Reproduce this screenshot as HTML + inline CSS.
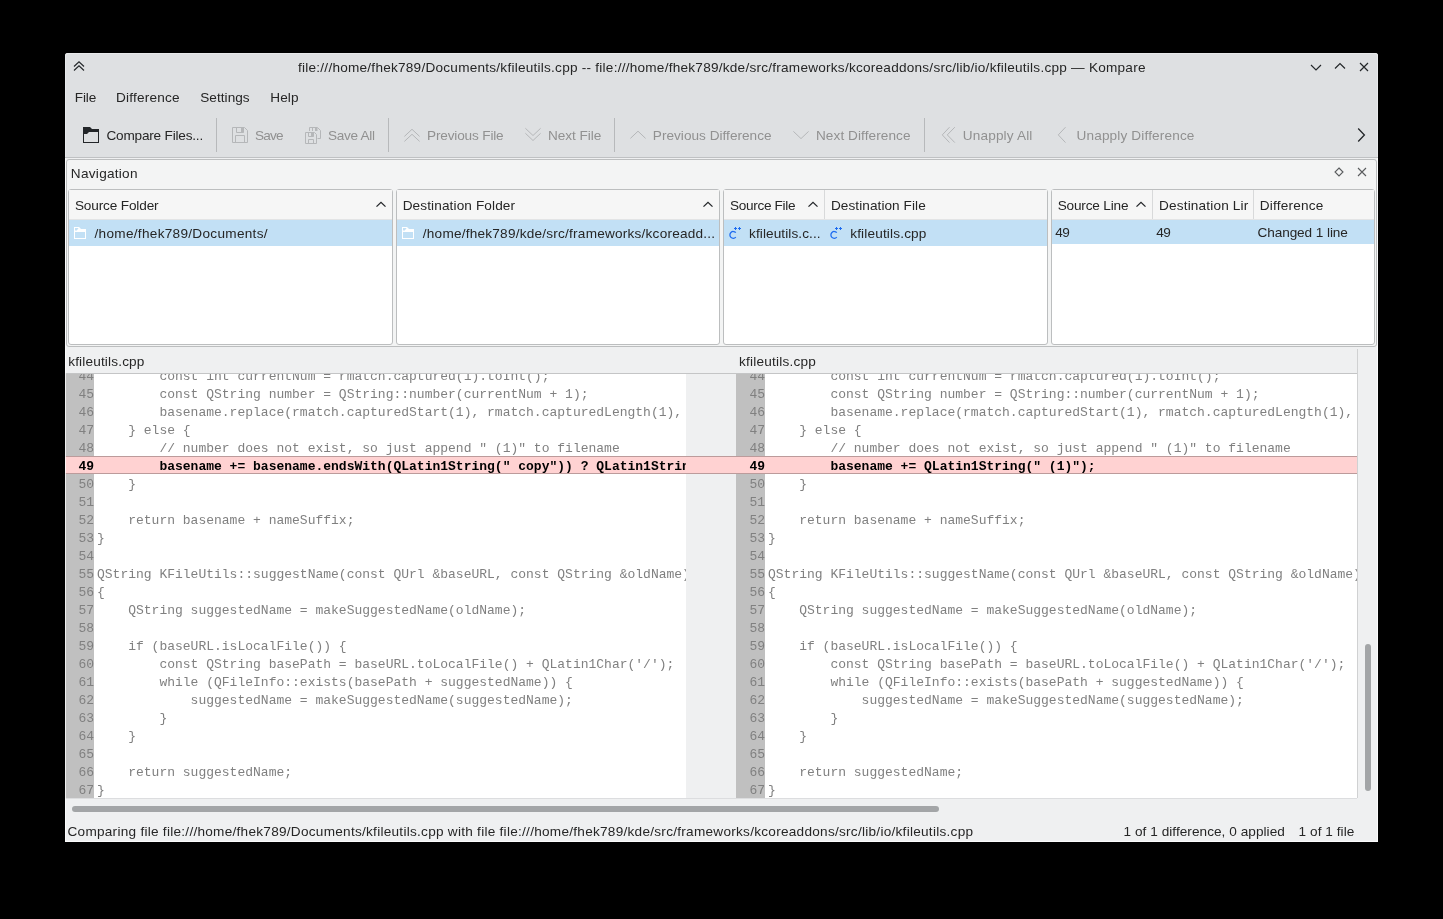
<!DOCTYPE html>
<html><head><meta charset="utf-8"><title>Kompare</title>
<style>
html,body{margin:0;padding:0;background:#000;width:1443px;height:919px;overflow:hidden;font-family:"Liberation Sans", sans-serif;}
</style></head><body>
<div style="position:absolute;left:65px;top:53px;width:1313px;height:789px;background:#eff0f1;border-radius:3px 3px 0 0;"></div><div style="position:absolute;left:65px;top:53px;width:1313px;height:104px;background:#dee0e2;border-radius:3px 3px 0 0;"></div><div style="position:absolute;left:65px;top:157px;width:1313px;height:1px;background:#bfc1c3;"></div><svg style="position:absolute;left:72px;top:60px;" width="14" height="13" viewBox="0 0 14 13"><path d="M2 6.5 L7 1.8 L12 6.5 M2 10.5 L7 5.8 L12 10.5" stroke="#232629" stroke-width="1.15" fill="none" stroke-linecap="butt"/></svg><svg style="position:absolute;left:1309px;top:62px;" width="14" height="10" viewBox="0 0 14 10"><path d="M2 3 L7 8 L12 3" stroke="#232629" stroke-width="1.15" fill="none" stroke-linecap="butt"/></svg><svg style="position:absolute;left:1333px;top:61px;" width="14" height="10" viewBox="0 0 14 10"><path d="M2 7.5 L7 2.5 L12 7.5" stroke="#232629" stroke-width="1.15" fill="none" stroke-linecap="butt"/></svg><svg style="position:absolute;left:1358px;top:61px;" width="13" height="12" viewBox="0 0 13 12"><path d="M2 2 L10 10 M10 2 L2 10" stroke="#232629" stroke-width="1.15" fill="none" stroke-linecap="butt"/></svg><div style="position:absolute;left:298.00px;top:57.79px;line-height:20px;font-size:13.6px;color:#232629;white-space:pre;font-family:'Liberation Sans', sans-serif;letter-spacing:0.239px;filter:grayscale(1);">file:///home/fhek789/Documents/kfileutils.cpp -- file:///home/fhek789/kde/src/frameworks/kcoreaddons/src/lib/io/kfileutils.cpp — Kompare</div><div style="position:absolute;left:74.87px;top:87.79px;line-height:20px;font-size:13.6px;color:#232629;white-space:pre;font-family:'Liberation Sans', sans-serif;letter-spacing:-0.190px;filter:grayscale(1);">File</div><div style="position:absolute;left:116.07px;top:87.79px;line-height:20px;font-size:13.6px;color:#232629;white-space:pre;font-family:'Liberation Sans', sans-serif;letter-spacing:0.192px;filter:grayscale(1);">Difference</div><div style="position:absolute;left:200.23px;top:87.79px;line-height:20px;font-size:13.6px;color:#232629;white-space:pre;font-family:'Liberation Sans', sans-serif;letter-spacing:0.043px;filter:grayscale(1);">Settings</div><div style="position:absolute;left:270.27px;top:87.79px;line-height:20px;font-size:13.6px;color:#232629;white-space:pre;font-family:'Liberation Sans', sans-serif;letter-spacing:0.094px;filter:grayscale(1);">Help</div><div style="position:absolute;left:106.47px;top:125.79px;line-height:20px;font-size:13.6px;color:#232629;white-space:pre;font-family:'Liberation Sans', sans-serif;letter-spacing:-0.199px;filter:grayscale(1);">Compare Files...</div><svg style="position:absolute;left:83px;top:127px;" width="16" height="16" viewBox="0 0 16 16"><path fill-rule="evenodd" d="M0 0 H7 L9 2 H16 V16 H0 Z M1 7 H4 L6 5 H15 V15 H1 Z" fill="#232629"/></svg><div style="position:absolute;left:216px;top:118px;width:1px;height:34px;background:#b7b9bb;"></div><div style="position:absolute;left:388px;top:118px;width:1px;height:34px;background:#b7b9bb;"></div><div style="position:absolute;left:614px;top:118px;width:1px;height:34px;background:#b7b9bb;"></div><div style="position:absolute;left:924px;top:118px;width:1px;height:34px;background:#b7b9bb;"></div><svg style="position:absolute;left:232px;top:127px;" width="16" height="16" viewBox="0 0 16 16"><path d="M0.5 0.5 H12.5 L15.5 3.5 V15.5 H0.5 Z M4.5 0.5 V5.5 H11.5 V0.5 M3.5 15.5 V8.5 H12.5 V15.5" stroke="#b5b7b9" stroke-width="1" fill="none"/><rect x="9" y="1" width="2.5" height="4.5" fill="#b5b7b9"/></svg><div style="position:absolute;left:255.03px;top:125.79px;line-height:20px;font-size:13.6px;color:#8f9193;white-space:pre;font-family:'Liberation Sans', sans-serif;letter-spacing:-0.812px;filter:grayscale(1);">Save</div><svg style="position:absolute;left:305px;top:127px;" width="16" height="17" viewBox="0 0 16 17"><path d="M4.5 4 V0.5 H12.5 L15.5 3.5 V11.5 H12.5 M7.5 0.5 V4 M0.5 5.5 H9.5 L11.5 7.5 V16.5 H0.5 Z M3.5 5.5 V9.5 H8.5 V5.5 M3.5 16.5 V12.5 H8.5 V16.5" stroke="#b5b7b9" stroke-width="1" fill="none"/><rect x="10" y="1" width="2.5" height="3" fill="#b5b7b9"/><rect x="6" y="6" width="2.5" height="3.5" fill="#b5b7b9"/></svg><div style="position:absolute;left:328.03px;top:125.79px;line-height:20px;font-size:13.6px;color:#8f9193;white-space:pre;font-family:'Liberation Sans', sans-serif;letter-spacing:-0.306px;filter:grayscale(1);">Save All</div><svg style="position:absolute;left:404px;top:127px;" width="16" height="16" viewBox="0 0 16 16"><path d="M0.4 9.4 L8 2.3 L15.6 9.4 M0.4 14.4 L8 7.3 L15.6 14.4" stroke="#b5b7b9" stroke-width="1" fill="none"/></svg><div style="position:absolute;left:426.97px;top:125.79px;line-height:20px;font-size:13.6px;color:#8f9193;white-space:pre;font-family:'Liberation Sans', sans-serif;letter-spacing:-0.155px;filter:grayscale(1);">Previous File</div><svg style="position:absolute;left:525px;top:127px;" width="16" height="16" viewBox="0 0 16 16"><path d="M0.4 1.3 L8 8.5 L15.6 1.3 M0.4 6.3 L8 13.5 L15.6 6.3" stroke="#b5b7b9" stroke-width="1" fill="none"/></svg><div style="position:absolute;left:548.07px;top:125.79px;line-height:20px;font-size:13.6px;color:#8f9193;white-space:pre;font-family:'Liberation Sans', sans-serif;letter-spacing:-0.058px;filter:grayscale(1);">Next File</div><svg style="position:absolute;left:630px;top:127px;" width="16" height="16" viewBox="0 0 16 16"><path d="M0.4 11.4 L8 4.2 L15.6 11.4" stroke="#b5b7b9" stroke-width="1" fill="none"/></svg><div style="position:absolute;left:652.87px;top:125.79px;line-height:20px;font-size:13.6px;color:#8f9193;white-space:pre;font-family:'Liberation Sans', sans-serif;letter-spacing:0.016px;filter:grayscale(1);">Previous Difference</div><svg style="position:absolute;left:793px;top:127px;" width="16" height="16" viewBox="0 0 16 16"><path d="M0.4 4.4 L8 11.6 L15.6 4.4" stroke="#b5b7b9" stroke-width="1" fill="none"/></svg><div style="position:absolute;left:815.97px;top:125.79px;line-height:20px;font-size:13.6px;color:#8f9193;white-space:pre;font-family:'Liberation Sans', sans-serif;letter-spacing:0.081px;filter:grayscale(1);">Next Difference</div><svg style="position:absolute;left:941px;top:127px;" width="16" height="16" viewBox="0 0 16 16"><path d="M8.5 0.2 L1.3 7.9 L8.5 15.6 M13.8 0.2 L6.3 7.9 L13.8 15.6" stroke="#b5b7b9" stroke-width="1" fill="none"/></svg><div style="position:absolute;left:962.74px;top:125.79px;line-height:20px;font-size:13.6px;color:#8f9193;white-space:pre;font-family:'Liberation Sans', sans-serif;letter-spacing:0.165px;filter:grayscale(1);">Unapply All</div><svg style="position:absolute;left:1057px;top:127px;" width="16" height="16" viewBox="0 0 16 16"><path d="M8.5 0.2 L1.3 7.9 L8.5 15.6" stroke="#b5b7b9" stroke-width="1" fill="none"/></svg><div style="position:absolute;left:1076.54px;top:125.79px;line-height:20px;font-size:13.6px;color:#8f9193;white-space:pre;font-family:'Liberation Sans', sans-serif;letter-spacing:0.148px;filter:grayscale(1);">Unapply Difference</div><svg style="position:absolute;left:1354px;top:127px;" width="14" height="16" viewBox="0 0 14 16"><path d="M4.2 1.5 L10.4 8 L4.2 14.5" stroke="#232629" stroke-width="1.3" fill="none"/></svg><div style="position:absolute;left:66px;top:159px;width:1311px;height:188px;background:#f3f4f4;box-sizing:border-box;border:1px solid #bcbebf;border-radius:3px;"></div><div style="position:absolute;left:70.87px;top:163.79px;line-height:20px;font-size:13.6px;color:#232629;white-space:pre;font-family:'Liberation Sans', sans-serif;letter-spacing:0.268px;filter:grayscale(1);">Navigation</div><svg style="position:absolute;left:1333px;top:166px;" width="12" height="12" viewBox="0 0 12 12"><path d="M6 2 L10 6 L6 10 L2 6 Z" stroke="#5a5c5e" stroke-width="1.1" fill="none"/></svg><svg style="position:absolute;left:1356px;top:166px;" width="12" height="12" viewBox="0 0 12 12"><path d="M2 2 L10 10 M10 2 L2 10" stroke="#5a5c5e" stroke-width="1.1" fill="none"/></svg><div style="position:absolute;left:68px;top:189px;width:325px;height:156px;background:#ffffff;box-sizing:border-box;border:1px solid #bcbebf;border-radius:3px;"></div><div style="position:absolute;left:69px;top:190px;width:323px;height:29px;background:#f6f6f6;"></div><div style="position:absolute;left:69px;top:219px;width:323px;height:1px;background:#e3e4e5;"></div><div style="position:absolute;left:396px;top:189px;width:324px;height:156px;background:#ffffff;box-sizing:border-box;border:1px solid #bcbebf;border-radius:3px;"></div><div style="position:absolute;left:397px;top:190px;width:322px;height:29px;background:#f6f6f6;"></div><div style="position:absolute;left:397px;top:219px;width:322px;height:1px;background:#e3e4e5;"></div><div style="position:absolute;left:723px;top:189px;width:325px;height:156px;background:#ffffff;box-sizing:border-box;border:1px solid #bcbebf;border-radius:3px;"></div><div style="position:absolute;left:724px;top:190px;width:323px;height:29px;background:#f6f6f6;"></div><div style="position:absolute;left:724px;top:219px;width:323px;height:1px;background:#e3e4e5;"></div><div style="position:absolute;left:1051px;top:189px;width:324px;height:156px;background:#ffffff;box-sizing:border-box;border:1px solid #bcbebf;border-radius:3px;"></div><div style="position:absolute;left:1052px;top:190px;width:322px;height:29px;background:#f6f6f6;"></div><div style="position:absolute;left:1052px;top:219px;width:322px;height:1px;background:#e3e4e5;"></div><div style="position:absolute;left:69px;top:220px;width:323px;height:26px;background:#c2e0f5;"></div><div style="position:absolute;left:74.93px;top:195.79px;line-height:20px;font-size:13.6px;color:#232629;white-space:pre;font-family:'Liberation Sans', sans-serif;letter-spacing:-0.141px;filter:grayscale(1);">Source Folder</div><svg style="position:absolute;left:375px;top:200px;" width="12" height="9" viewBox="0 0 12 9"><path d="M1.5 6.6 L6 2.3 L10.5 6.6" stroke="#232629" stroke-width="1.3" fill="none"/></svg><svg style="position:absolute;left:74px;top:227px;" width="12" height="12" viewBox="0 0 12 12"><path fill-rule="evenodd" d="M0 0 H5 L7 2 H12 V12 H0 Z M1 5 H11 V11 H1 Z M1 1 H4.6 L2.8 3.4 H1 Z" fill="#ffffff"/></svg><div style="position:absolute;left:94.52px;top:223.79px;line-height:20px;font-size:13.6px;color:#232629;white-space:pre;font-family:'Liberation Sans', sans-serif;letter-spacing:0.296px;filter:grayscale(1);">/home/fhek789/Documents/</div><div style="position:absolute;left:397px;top:220px;width:322px;height:26px;background:#c2e0f5;"></div><div style="position:absolute;left:402.67px;top:195.79px;line-height:20px;font-size:13.6px;color:#232629;white-space:pre;font-family:'Liberation Sans', sans-serif;letter-spacing:0.122px;filter:grayscale(1);">Destination Folder</div><svg style="position:absolute;left:702px;top:200px;" width="12" height="9" viewBox="0 0 12 9"><path d="M1.5 6.6 L6 2.3 L10.5 6.6" stroke="#232629" stroke-width="1.3" fill="none"/></svg><svg style="position:absolute;left:402px;top:227px;" width="12" height="12" viewBox="0 0 12 12"><path fill-rule="evenodd" d="M0 0 H5 L7 2 H12 V12 H0 Z M1 5 H11 V11 H1 Z M1 1 H4.6 L2.8 3.4 H1 Z" fill="#ffffff"/></svg><div style="position:absolute;left:422.82px;top:223.79px;line-height:20px;font-size:13.6px;color:#232629;white-space:pre;font-family:'Liberation Sans', sans-serif;letter-spacing:0.226px;filter:grayscale(1);">/home/fhek789/kde/src/frameworks/kcoreadd...</div><div style="position:absolute;left:724px;top:220px;width:323px;height:26px;background:#c2e0f5;"></div><div style="position:absolute;left:730.03px;top:195.79px;line-height:20px;font-size:13.6px;color:#232629;white-space:pre;font-family:'Liberation Sans', sans-serif;letter-spacing:-0.323px;filter:grayscale(1);">Source File</div><svg style="position:absolute;left:807px;top:200px;" width="12" height="9" viewBox="0 0 12 9"><path d="M1.5 6.6 L6 2.3 L10.5 6.6" stroke="#232629" stroke-width="1.3" fill="none"/></svg><div style="position:absolute;left:824px;top:190px;width:1px;height:29px;background:#d8d9da;"></div><div style="position:absolute;left:830.97px;top:195.79px;line-height:20px;font-size:13.6px;color:#232629;white-space:pre;font-family:'Liberation Sans', sans-serif;letter-spacing:0.069px;filter:grayscale(1);">Destination File</div><svg style="position:absolute;left:727px;top:226px;" width="16" height="14" viewBox="0 0 16 14"><path d="M8.8 6.6 A3.4 3.4 0 1 0 8.8 11.2" fill="none" stroke="#1d6bf0" stroke-width="1.25"/><path d="M7 2.5 H10 M8.5 1 V4 M11 2.5 H14 M12.5 1 V4" stroke="#1d6bf0" stroke-width="1"/></svg><div style="position:absolute;left:749.08px;top:223.79px;line-height:20px;font-size:13.6px;color:#232629;white-space:pre;font-family:'Liberation Sans', sans-serif;letter-spacing:0.087px;filter:grayscale(1);">kfileutils.c...</div><svg style="position:absolute;left:828px;top:226px;" width="16" height="14" viewBox="0 0 16 14"><path d="M8.8 6.6 A3.4 3.4 0 1 0 8.8 11.2" fill="none" stroke="#1d6bf0" stroke-width="1.25"/><path d="M7 2.5 H10 M8.5 1 V4 M11 2.5 H14 M12.5 1 V4" stroke="#1d6bf0" stroke-width="1"/></svg><div style="position:absolute;left:850.18px;top:223.79px;line-height:20px;font-size:13.6px;color:#232629;white-space:pre;font-family:'Liberation Sans', sans-serif;letter-spacing:0.167px;filter:grayscale(1);">kfileutils.cpp</div><div style="position:absolute;left:1052px;top:220px;width:322px;height:24px;background:#c2e0f5;"></div><div style="position:absolute;left:1057.73px;top:195.79px;line-height:20px;font-size:13.6px;color:#232629;white-space:pre;font-family:'Liberation Sans', sans-serif;letter-spacing:-0.183px;filter:grayscale(1);">Source Line</div><svg style="position:absolute;left:1135px;top:200px;" width="12" height="9" viewBox="0 0 12 9"><path d="M1.5 6.6 L6 2.3 L10.5 6.6" stroke="#232629" stroke-width="1.3" fill="none"/></svg><div style="position:absolute;left:1152px;top:190px;width:1px;height:29px;background:#d8d9da;"></div><div style="position:absolute;left:1159.07px;top:195.79px;line-height:20px;font-size:13.6px;color:#232629;white-space:pre;font-family:'Liberation Sans', sans-serif;letter-spacing:0.164px;filter:grayscale(1);">Destination Lir</div><div style="position:absolute;left:1253px;top:190px;width:1px;height:29px;background:#d8d9da;"></div><div style="position:absolute;left:1259.67px;top:195.79px;line-height:20px;font-size:13.6px;color:#232629;white-space:pre;font-family:'Liberation Sans', sans-serif;letter-spacing:0.214px;filter:grayscale(1);">Difference</div><div style="position:absolute;left:1055.27px;top:222.79px;line-height:20px;font-size:13.6px;color:#232629;white-space:pre;font-family:'Liberation Sans', sans-serif;letter-spacing:-0.551px;filter:grayscale(1);">49</div><div style="position:absolute;left:1156.17px;top:222.79px;line-height:20px;font-size:13.6px;color:#232629;white-space:pre;font-family:'Liberation Sans', sans-serif;letter-spacing:-0.351px;filter:grayscale(1);">49</div><div style="position:absolute;left:1257.47px;top:222.79px;line-height:20px;font-size:13.6px;color:#232629;white-space:pre;font-family:'Liberation Sans', sans-serif;letter-spacing:-0.082px;filter:grayscale(1);">Changed 1 line</div><div style="position:absolute;left:68.18px;top:351.79px;line-height:20px;font-size:13.6px;color:#232629;white-space:pre;font-family:'Liberation Sans', sans-serif;letter-spacing:0.167px;filter:grayscale(1);">kfileutils.cpp</div><div style="position:absolute;left:738.98px;top:351.79px;line-height:20px;font-size:13.6px;color:#232629;white-space:pre;font-family:'Liberation Sans', sans-serif;letter-spacing:0.213px;filter:grayscale(1);">kfileutils.cpp</div><div style="position:absolute;left:65px;top:373px;width:1292px;height:1px;background:#c4c5c6;"></div><div style="position:absolute;left:1357px;top:349px;width:1px;height:449px;background:#d0d1d2;"></div><div style="position:absolute;left:65px;top:374px;width:621px;height:424px;overflow:hidden;background:#ffffff;"><div style="position:absolute;left:0;top:0;width:29px;height:424px;background:#c0c0c0;"></div><div style="position:absolute;left:0;top:-6.5px;width:29px;text-align:right;line-height:18px;font-size:13px;font-family:'Liberation Mono', monospace;color:#808080;font-weight:normal;white-space:pre;filter:grayscale(1);">44</div><div style="position:absolute;left:32px;top:-6.5px;line-height:18px;font-size:13px;font-family:'Liberation Mono', monospace;color:#808080;font-weight:normal;white-space:pre;filter:grayscale(1);">        const int currentNum = rmatch.captured(1).toInt();</div><div style="position:absolute;left:0;top:11.5px;width:29px;text-align:right;line-height:18px;font-size:13px;font-family:'Liberation Mono', monospace;color:#808080;font-weight:normal;white-space:pre;filter:grayscale(1);">45</div><div style="position:absolute;left:32px;top:11.5px;line-height:18px;font-size:13px;font-family:'Liberation Mono', monospace;color:#808080;font-weight:normal;white-space:pre;filter:grayscale(1);">        const QString number = QString::number(currentNum + 1);</div><div style="position:absolute;left:0;top:29.5px;width:29px;text-align:right;line-height:18px;font-size:13px;font-family:'Liberation Mono', monospace;color:#808080;font-weight:normal;white-space:pre;filter:grayscale(1);">46</div><div style="position:absolute;left:32px;top:29.5px;line-height:18px;font-size:13px;font-family:'Liberation Mono', monospace;color:#808080;font-weight:normal;white-space:pre;filter:grayscale(1);">        basename.replace(rmatch.capturedStart(1), rmatch.capturedLength(1), number);</div><div style="position:absolute;left:0;top:47.5px;width:29px;text-align:right;line-height:18px;font-size:13px;font-family:'Liberation Mono', monospace;color:#808080;font-weight:normal;white-space:pre;filter:grayscale(1);">47</div><div style="position:absolute;left:32px;top:47.5px;line-height:18px;font-size:13px;font-family:'Liberation Mono', monospace;color:#808080;font-weight:normal;white-space:pre;filter:grayscale(1);">    } else {</div><div style="position:absolute;left:0;top:65.5px;width:29px;text-align:right;line-height:18px;font-size:13px;font-family:'Liberation Mono', monospace;color:#808080;font-weight:normal;white-space:pre;filter:grayscale(1);">48</div><div style="position:absolute;left:32px;top:65.5px;line-height:18px;font-size:13px;font-family:'Liberation Mono', monospace;color:#808080;font-weight:normal;white-space:pre;filter:grayscale(1);">        // number does not exist, so just append &quot; (1)&quot; to filename</div><div style="position:absolute;left:0;top:82px;width:681px;height:18px;background:#ffd2d2;box-sizing:border-box;border-top:1px solid #bc9b9b;border-bottom:1px solid #bc9b9b;"></div><div style="position:absolute;left:0;top:83.5px;width:29px;text-align:right;line-height:18px;font-size:13px;font-family:'Liberation Mono', monospace;color:#000000;font-weight:bold;white-space:pre;filter:grayscale(1);">49</div><div style="position:absolute;left:32px;top:83.5px;line-height:18px;font-size:13px;font-family:'Liberation Mono', monospace;color:#000000;font-weight:bold;white-space:pre;filter:grayscale(1);">        basename += basename.endsWith(QLatin1String(&quot; copy&quot;)) ? QLatin1String(&quot; (1)&quot;) : QLatin1String(&quot; copy&quot;);</div><div style="position:absolute;left:0;top:101.5px;width:29px;text-align:right;line-height:18px;font-size:13px;font-family:'Liberation Mono', monospace;color:#808080;font-weight:normal;white-space:pre;filter:grayscale(1);">50</div><div style="position:absolute;left:32px;top:101.5px;line-height:18px;font-size:13px;font-family:'Liberation Mono', monospace;color:#808080;font-weight:normal;white-space:pre;filter:grayscale(1);">    }</div><div style="position:absolute;left:0;top:119.5px;width:29px;text-align:right;line-height:18px;font-size:13px;font-family:'Liberation Mono', monospace;color:#808080;font-weight:normal;white-space:pre;filter:grayscale(1);">51</div><div style="position:absolute;left:32px;top:119.5px;line-height:18px;font-size:13px;font-family:'Liberation Mono', monospace;color:#808080;font-weight:normal;white-space:pre;filter:grayscale(1);"></div><div style="position:absolute;left:0;top:137.5px;width:29px;text-align:right;line-height:18px;font-size:13px;font-family:'Liberation Mono', monospace;color:#808080;font-weight:normal;white-space:pre;filter:grayscale(1);">52</div><div style="position:absolute;left:32px;top:137.5px;line-height:18px;font-size:13px;font-family:'Liberation Mono', monospace;color:#808080;font-weight:normal;white-space:pre;filter:grayscale(1);">    return basename + nameSuffix;</div><div style="position:absolute;left:0;top:155.5px;width:29px;text-align:right;line-height:18px;font-size:13px;font-family:'Liberation Mono', monospace;color:#808080;font-weight:normal;white-space:pre;filter:grayscale(1);">53</div><div style="position:absolute;left:32px;top:155.5px;line-height:18px;font-size:13px;font-family:'Liberation Mono', monospace;color:#808080;font-weight:normal;white-space:pre;filter:grayscale(1);">}</div><div style="position:absolute;left:0;top:173.5px;width:29px;text-align:right;line-height:18px;font-size:13px;font-family:'Liberation Mono', monospace;color:#808080;font-weight:normal;white-space:pre;filter:grayscale(1);">54</div><div style="position:absolute;left:32px;top:173.5px;line-height:18px;font-size:13px;font-family:'Liberation Mono', monospace;color:#808080;font-weight:normal;white-space:pre;filter:grayscale(1);"></div><div style="position:absolute;left:0;top:191.5px;width:29px;text-align:right;line-height:18px;font-size:13px;font-family:'Liberation Mono', monospace;color:#808080;font-weight:normal;white-space:pre;filter:grayscale(1);">55</div><div style="position:absolute;left:32px;top:191.5px;line-height:18px;font-size:13px;font-family:'Liberation Mono', monospace;color:#808080;font-weight:normal;white-space:pre;filter:grayscale(1);">QString KFileUtils::suggestName(const QUrl &amp;baseURL, const QString &amp;oldName)</div><div style="position:absolute;left:0;top:209.5px;width:29px;text-align:right;line-height:18px;font-size:13px;font-family:'Liberation Mono', monospace;color:#808080;font-weight:normal;white-space:pre;filter:grayscale(1);">56</div><div style="position:absolute;left:32px;top:209.5px;line-height:18px;font-size:13px;font-family:'Liberation Mono', monospace;color:#808080;font-weight:normal;white-space:pre;filter:grayscale(1);">{</div><div style="position:absolute;left:0;top:227.5px;width:29px;text-align:right;line-height:18px;font-size:13px;font-family:'Liberation Mono', monospace;color:#808080;font-weight:normal;white-space:pre;filter:grayscale(1);">57</div><div style="position:absolute;left:32px;top:227.5px;line-height:18px;font-size:13px;font-family:'Liberation Mono', monospace;color:#808080;font-weight:normal;white-space:pre;filter:grayscale(1);">    QString suggestedName = makeSuggestedName(oldName);</div><div style="position:absolute;left:0;top:245.5px;width:29px;text-align:right;line-height:18px;font-size:13px;font-family:'Liberation Mono', monospace;color:#808080;font-weight:normal;white-space:pre;filter:grayscale(1);">58</div><div style="position:absolute;left:32px;top:245.5px;line-height:18px;font-size:13px;font-family:'Liberation Mono', monospace;color:#808080;font-weight:normal;white-space:pre;filter:grayscale(1);"></div><div style="position:absolute;left:0;top:263.5px;width:29px;text-align:right;line-height:18px;font-size:13px;font-family:'Liberation Mono', monospace;color:#808080;font-weight:normal;white-space:pre;filter:grayscale(1);">59</div><div style="position:absolute;left:32px;top:263.5px;line-height:18px;font-size:13px;font-family:'Liberation Mono', monospace;color:#808080;font-weight:normal;white-space:pre;filter:grayscale(1);">    if (baseURL.isLocalFile()) {</div><div style="position:absolute;left:0;top:281.5px;width:29px;text-align:right;line-height:18px;font-size:13px;font-family:'Liberation Mono', monospace;color:#808080;font-weight:normal;white-space:pre;filter:grayscale(1);">60</div><div style="position:absolute;left:32px;top:281.5px;line-height:18px;font-size:13px;font-family:'Liberation Mono', monospace;color:#808080;font-weight:normal;white-space:pre;filter:grayscale(1);">        const QString basePath = baseURL.toLocalFile() + QLatin1Char(&#x27;/&#x27;);</div><div style="position:absolute;left:0;top:299.5px;width:29px;text-align:right;line-height:18px;font-size:13px;font-family:'Liberation Mono', monospace;color:#808080;font-weight:normal;white-space:pre;filter:grayscale(1);">61</div><div style="position:absolute;left:32px;top:299.5px;line-height:18px;font-size:13px;font-family:'Liberation Mono', monospace;color:#808080;font-weight:normal;white-space:pre;filter:grayscale(1);">        while (QFileInfo::exists(basePath + suggestedName)) {</div><div style="position:absolute;left:0;top:317.5px;width:29px;text-align:right;line-height:18px;font-size:13px;font-family:'Liberation Mono', monospace;color:#808080;font-weight:normal;white-space:pre;filter:grayscale(1);">62</div><div style="position:absolute;left:32px;top:317.5px;line-height:18px;font-size:13px;font-family:'Liberation Mono', monospace;color:#808080;font-weight:normal;white-space:pre;filter:grayscale(1);">            suggestedName = makeSuggestedName(suggestedName);</div><div style="position:absolute;left:0;top:335.5px;width:29px;text-align:right;line-height:18px;font-size:13px;font-family:'Liberation Mono', monospace;color:#808080;font-weight:normal;white-space:pre;filter:grayscale(1);">63</div><div style="position:absolute;left:32px;top:335.5px;line-height:18px;font-size:13px;font-family:'Liberation Mono', monospace;color:#808080;font-weight:normal;white-space:pre;filter:grayscale(1);">        }</div><div style="position:absolute;left:0;top:353.5px;width:29px;text-align:right;line-height:18px;font-size:13px;font-family:'Liberation Mono', monospace;color:#808080;font-weight:normal;white-space:pre;filter:grayscale(1);">64</div><div style="position:absolute;left:32px;top:353.5px;line-height:18px;font-size:13px;font-family:'Liberation Mono', monospace;color:#808080;font-weight:normal;white-space:pre;filter:grayscale(1);">    }</div><div style="position:absolute;left:0;top:371.5px;width:29px;text-align:right;line-height:18px;font-size:13px;font-family:'Liberation Mono', monospace;color:#808080;font-weight:normal;white-space:pre;filter:grayscale(1);">65</div><div style="position:absolute;left:32px;top:371.5px;line-height:18px;font-size:13px;font-family:'Liberation Mono', monospace;color:#808080;font-weight:normal;white-space:pre;filter:grayscale(1);"></div><div style="position:absolute;left:0;top:389.5px;width:29px;text-align:right;line-height:18px;font-size:13px;font-family:'Liberation Mono', monospace;color:#808080;font-weight:normal;white-space:pre;filter:grayscale(1);">66</div><div style="position:absolute;left:32px;top:389.5px;line-height:18px;font-size:13px;font-family:'Liberation Mono', monospace;color:#808080;font-weight:normal;white-space:pre;filter:grayscale(1);">    return suggestedName;</div><div style="position:absolute;left:0;top:407.5px;width:29px;text-align:right;line-height:18px;font-size:13px;font-family:'Liberation Mono', monospace;color:#808080;font-weight:normal;white-space:pre;filter:grayscale(1);">67</div><div style="position:absolute;left:32px;top:407.5px;line-height:18px;font-size:13px;font-family:'Liberation Mono', monospace;color:#808080;font-weight:normal;white-space:pre;filter:grayscale(1);">}</div></div><div style="position:absolute;left:686px;top:374px;width:50px;height:424px;background:#eff0f1;"></div><div style="position:absolute;left:736px;top:374px;width:621px;height:424px;overflow:hidden;background:#ffffff;"><div style="position:absolute;left:0;top:0;width:29px;height:424px;background:#c0c0c0;"></div><div style="position:absolute;left:0;top:-6.5px;width:29px;text-align:right;line-height:18px;font-size:13px;font-family:'Liberation Mono', monospace;color:#808080;font-weight:normal;white-space:pre;filter:grayscale(1);">44</div><div style="position:absolute;left:32px;top:-6.5px;line-height:18px;font-size:13px;font-family:'Liberation Mono', monospace;color:#808080;font-weight:normal;white-space:pre;filter:grayscale(1);">        const int currentNum = rmatch.captured(1).toInt();</div><div style="position:absolute;left:0;top:11.5px;width:29px;text-align:right;line-height:18px;font-size:13px;font-family:'Liberation Mono', monospace;color:#808080;font-weight:normal;white-space:pre;filter:grayscale(1);">45</div><div style="position:absolute;left:32px;top:11.5px;line-height:18px;font-size:13px;font-family:'Liberation Mono', monospace;color:#808080;font-weight:normal;white-space:pre;filter:grayscale(1);">        const QString number = QString::number(currentNum + 1);</div><div style="position:absolute;left:0;top:29.5px;width:29px;text-align:right;line-height:18px;font-size:13px;font-family:'Liberation Mono', monospace;color:#808080;font-weight:normal;white-space:pre;filter:grayscale(1);">46</div><div style="position:absolute;left:32px;top:29.5px;line-height:18px;font-size:13px;font-family:'Liberation Mono', monospace;color:#808080;font-weight:normal;white-space:pre;filter:grayscale(1);">        basename.replace(rmatch.capturedStart(1), rmatch.capturedLength(1), number);</div><div style="position:absolute;left:0;top:47.5px;width:29px;text-align:right;line-height:18px;font-size:13px;font-family:'Liberation Mono', monospace;color:#808080;font-weight:normal;white-space:pre;filter:grayscale(1);">47</div><div style="position:absolute;left:32px;top:47.5px;line-height:18px;font-size:13px;font-family:'Liberation Mono', monospace;color:#808080;font-weight:normal;white-space:pre;filter:grayscale(1);">    } else {</div><div style="position:absolute;left:0;top:65.5px;width:29px;text-align:right;line-height:18px;font-size:13px;font-family:'Liberation Mono', monospace;color:#808080;font-weight:normal;white-space:pre;filter:grayscale(1);">48</div><div style="position:absolute;left:32px;top:65.5px;line-height:18px;font-size:13px;font-family:'Liberation Mono', monospace;color:#808080;font-weight:normal;white-space:pre;filter:grayscale(1);">        // number does not exist, so just append &quot; (1)&quot; to filename</div><div style="position:absolute;left:0;top:82px;width:681px;height:18px;background:#ffd2d2;box-sizing:border-box;border-top:1px solid #bc9b9b;border-bottom:1px solid #bc9b9b;"></div><div style="position:absolute;left:0;top:83.5px;width:29px;text-align:right;line-height:18px;font-size:13px;font-family:'Liberation Mono', monospace;color:#000000;font-weight:bold;white-space:pre;filter:grayscale(1);">49</div><div style="position:absolute;left:32px;top:83.5px;line-height:18px;font-size:13px;font-family:'Liberation Mono', monospace;color:#000000;font-weight:bold;white-space:pre;filter:grayscale(1);">        basename += QLatin1String(&quot; (1)&quot;);</div><div style="position:absolute;left:0;top:101.5px;width:29px;text-align:right;line-height:18px;font-size:13px;font-family:'Liberation Mono', monospace;color:#808080;font-weight:normal;white-space:pre;filter:grayscale(1);">50</div><div style="position:absolute;left:32px;top:101.5px;line-height:18px;font-size:13px;font-family:'Liberation Mono', monospace;color:#808080;font-weight:normal;white-space:pre;filter:grayscale(1);">    }</div><div style="position:absolute;left:0;top:119.5px;width:29px;text-align:right;line-height:18px;font-size:13px;font-family:'Liberation Mono', monospace;color:#808080;font-weight:normal;white-space:pre;filter:grayscale(1);">51</div><div style="position:absolute;left:32px;top:119.5px;line-height:18px;font-size:13px;font-family:'Liberation Mono', monospace;color:#808080;font-weight:normal;white-space:pre;filter:grayscale(1);"></div><div style="position:absolute;left:0;top:137.5px;width:29px;text-align:right;line-height:18px;font-size:13px;font-family:'Liberation Mono', monospace;color:#808080;font-weight:normal;white-space:pre;filter:grayscale(1);">52</div><div style="position:absolute;left:32px;top:137.5px;line-height:18px;font-size:13px;font-family:'Liberation Mono', monospace;color:#808080;font-weight:normal;white-space:pre;filter:grayscale(1);">    return basename + nameSuffix;</div><div style="position:absolute;left:0;top:155.5px;width:29px;text-align:right;line-height:18px;font-size:13px;font-family:'Liberation Mono', monospace;color:#808080;font-weight:normal;white-space:pre;filter:grayscale(1);">53</div><div style="position:absolute;left:32px;top:155.5px;line-height:18px;font-size:13px;font-family:'Liberation Mono', monospace;color:#808080;font-weight:normal;white-space:pre;filter:grayscale(1);">}</div><div style="position:absolute;left:0;top:173.5px;width:29px;text-align:right;line-height:18px;font-size:13px;font-family:'Liberation Mono', monospace;color:#808080;font-weight:normal;white-space:pre;filter:grayscale(1);">54</div><div style="position:absolute;left:32px;top:173.5px;line-height:18px;font-size:13px;font-family:'Liberation Mono', monospace;color:#808080;font-weight:normal;white-space:pre;filter:grayscale(1);"></div><div style="position:absolute;left:0;top:191.5px;width:29px;text-align:right;line-height:18px;font-size:13px;font-family:'Liberation Mono', monospace;color:#808080;font-weight:normal;white-space:pre;filter:grayscale(1);">55</div><div style="position:absolute;left:32px;top:191.5px;line-height:18px;font-size:13px;font-family:'Liberation Mono', monospace;color:#808080;font-weight:normal;white-space:pre;filter:grayscale(1);">QString KFileUtils::suggestName(const QUrl &amp;baseURL, const QString &amp;oldName)</div><div style="position:absolute;left:0;top:209.5px;width:29px;text-align:right;line-height:18px;font-size:13px;font-family:'Liberation Mono', monospace;color:#808080;font-weight:normal;white-space:pre;filter:grayscale(1);">56</div><div style="position:absolute;left:32px;top:209.5px;line-height:18px;font-size:13px;font-family:'Liberation Mono', monospace;color:#808080;font-weight:normal;white-space:pre;filter:grayscale(1);">{</div><div style="position:absolute;left:0;top:227.5px;width:29px;text-align:right;line-height:18px;font-size:13px;font-family:'Liberation Mono', monospace;color:#808080;font-weight:normal;white-space:pre;filter:grayscale(1);">57</div><div style="position:absolute;left:32px;top:227.5px;line-height:18px;font-size:13px;font-family:'Liberation Mono', monospace;color:#808080;font-weight:normal;white-space:pre;filter:grayscale(1);">    QString suggestedName = makeSuggestedName(oldName);</div><div style="position:absolute;left:0;top:245.5px;width:29px;text-align:right;line-height:18px;font-size:13px;font-family:'Liberation Mono', monospace;color:#808080;font-weight:normal;white-space:pre;filter:grayscale(1);">58</div><div style="position:absolute;left:32px;top:245.5px;line-height:18px;font-size:13px;font-family:'Liberation Mono', monospace;color:#808080;font-weight:normal;white-space:pre;filter:grayscale(1);"></div><div style="position:absolute;left:0;top:263.5px;width:29px;text-align:right;line-height:18px;font-size:13px;font-family:'Liberation Mono', monospace;color:#808080;font-weight:normal;white-space:pre;filter:grayscale(1);">59</div><div style="position:absolute;left:32px;top:263.5px;line-height:18px;font-size:13px;font-family:'Liberation Mono', monospace;color:#808080;font-weight:normal;white-space:pre;filter:grayscale(1);">    if (baseURL.isLocalFile()) {</div><div style="position:absolute;left:0;top:281.5px;width:29px;text-align:right;line-height:18px;font-size:13px;font-family:'Liberation Mono', monospace;color:#808080;font-weight:normal;white-space:pre;filter:grayscale(1);">60</div><div style="position:absolute;left:32px;top:281.5px;line-height:18px;font-size:13px;font-family:'Liberation Mono', monospace;color:#808080;font-weight:normal;white-space:pre;filter:grayscale(1);">        const QString basePath = baseURL.toLocalFile() + QLatin1Char(&#x27;/&#x27;);</div><div style="position:absolute;left:0;top:299.5px;width:29px;text-align:right;line-height:18px;font-size:13px;font-family:'Liberation Mono', monospace;color:#808080;font-weight:normal;white-space:pre;filter:grayscale(1);">61</div><div style="position:absolute;left:32px;top:299.5px;line-height:18px;font-size:13px;font-family:'Liberation Mono', monospace;color:#808080;font-weight:normal;white-space:pre;filter:grayscale(1);">        while (QFileInfo::exists(basePath + suggestedName)) {</div><div style="position:absolute;left:0;top:317.5px;width:29px;text-align:right;line-height:18px;font-size:13px;font-family:'Liberation Mono', monospace;color:#808080;font-weight:normal;white-space:pre;filter:grayscale(1);">62</div><div style="position:absolute;left:32px;top:317.5px;line-height:18px;font-size:13px;font-family:'Liberation Mono', monospace;color:#808080;font-weight:normal;white-space:pre;filter:grayscale(1);">            suggestedName = makeSuggestedName(suggestedName);</div><div style="position:absolute;left:0;top:335.5px;width:29px;text-align:right;line-height:18px;font-size:13px;font-family:'Liberation Mono', monospace;color:#808080;font-weight:normal;white-space:pre;filter:grayscale(1);">63</div><div style="position:absolute;left:32px;top:335.5px;line-height:18px;font-size:13px;font-family:'Liberation Mono', monospace;color:#808080;font-weight:normal;white-space:pre;filter:grayscale(1);">        }</div><div style="position:absolute;left:0;top:353.5px;width:29px;text-align:right;line-height:18px;font-size:13px;font-family:'Liberation Mono', monospace;color:#808080;font-weight:normal;white-space:pre;filter:grayscale(1);">64</div><div style="position:absolute;left:32px;top:353.5px;line-height:18px;font-size:13px;font-family:'Liberation Mono', monospace;color:#808080;font-weight:normal;white-space:pre;filter:grayscale(1);">    }</div><div style="position:absolute;left:0;top:371.5px;width:29px;text-align:right;line-height:18px;font-size:13px;font-family:'Liberation Mono', monospace;color:#808080;font-weight:normal;white-space:pre;filter:grayscale(1);">65</div><div style="position:absolute;left:32px;top:371.5px;line-height:18px;font-size:13px;font-family:'Liberation Mono', monospace;color:#808080;font-weight:normal;white-space:pre;filter:grayscale(1);"></div><div style="position:absolute;left:0;top:389.5px;width:29px;text-align:right;line-height:18px;font-size:13px;font-family:'Liberation Mono', monospace;color:#808080;font-weight:normal;white-space:pre;filter:grayscale(1);">66</div><div style="position:absolute;left:32px;top:389.5px;line-height:18px;font-size:13px;font-family:'Liberation Mono', monospace;color:#808080;font-weight:normal;white-space:pre;filter:grayscale(1);">    return suggestedName;</div><div style="position:absolute;left:0;top:407.5px;width:29px;text-align:right;line-height:18px;font-size:13px;font-family:'Liberation Mono', monospace;color:#808080;font-weight:normal;white-space:pre;filter:grayscale(1);">67</div><div style="position:absolute;left:32px;top:407.5px;line-height:18px;font-size:13px;font-family:'Liberation Mono', monospace;color:#808080;font-weight:normal;white-space:pre;filter:grayscale(1);">}</div></div><div style="position:absolute;left:686px;top:456px;width:50px;height:18px;background:#ffd2d2;box-sizing:border-box;border-top:1px solid #bc9b9b;border-bottom:1px solid #bc9b9b;"></div><div style="position:absolute;left:65px;top:798px;width:1292px;height:1px;background:#dcdddf;"></div><div style="position:absolute;left:1365px;top:644px;width:6px;height:147px;background:#a3a5a7;border-radius:3px;"></div><div style="position:absolute;left:72px;top:806px;width:867px;height:6px;background:#a3a5a7;border-radius:3px;"></div><div style="position:absolute;left:67.47px;top:821.79px;line-height:20px;font-size:13.6px;color:#232629;white-space:pre;font-family:'Liberation Sans', sans-serif;letter-spacing:0.265px;filter:grayscale(1);">Comparing file file:///home/fhek789/Documents/kfileutils.cpp with file file:///home/fhek789/kde/src/frameworks/kcoreaddons/src/lib/io/kfileutils.cpp</div><div style="position:absolute;left:1123.56px;top:821.79px;line-height:20px;font-size:13.6px;color:#232629;white-space:pre;font-family:'Liberation Sans', sans-serif;letter-spacing:0.048px;filter:grayscale(1);">1 of 1 difference, 0 applied</div><div style="position:absolute;left:1298.56px;top:821.79px;line-height:20px;font-size:13.6px;color:#232629;white-space:pre;font-family:'Liberation Sans', sans-serif;letter-spacing:0.064px;filter:grayscale(1);">1 of 1 file</div><div style="position:absolute;left:65px;top:53px;width:1313px;height:104px;box-sizing:border-box;border:1px solid rgba(255,255,255,0.3);border-bottom:0;border-radius:3px 3px 0 0;"></div><div style="position:absolute;left:65px;top:158px;width:1313px;height:684px;box-sizing:border-box;border:1px solid rgba(255,255,255,0.75);border-top:0;"></div>
</body></html>
